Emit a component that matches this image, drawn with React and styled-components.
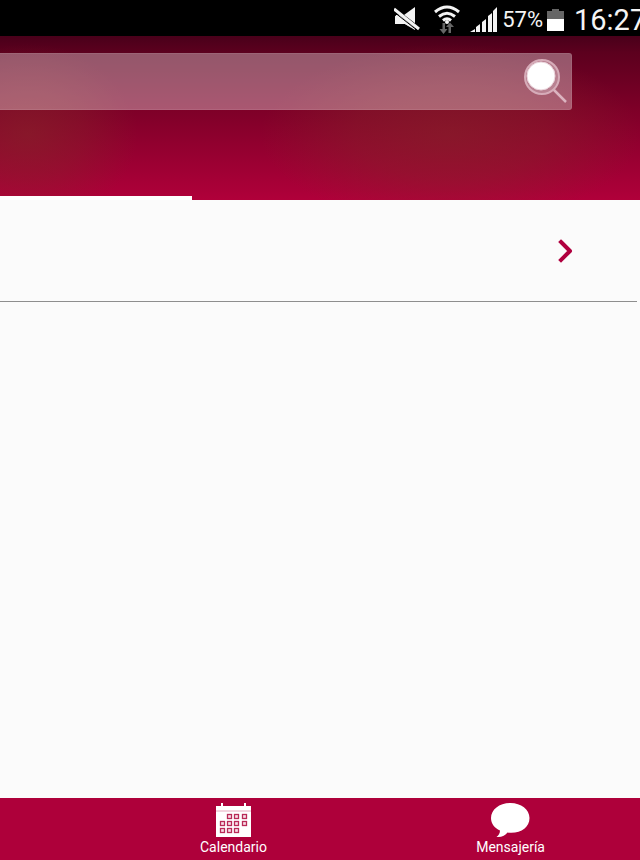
import styled, { createGlobalStyle } from "styled-components";

const GlobalStyle = createGlobalStyle`
    * {
        box-sizing: border-box;
    }

    body {
        margin: 0;
        font-family: Roboto, 'Noto Sans', sans-serif;
        background: #fbfbfb;
    }
`;

const Screen = styled.div`
    display: flex;
    flex-direction: column;
    min-height: 100vh;
    overflow: hidden;
`;

const StatusBar = styled.div`
    display: flex;
    align-items: center;
    justify-content: flex-end;
    height: 36px;
    padding-top: 3px;
    background: #000;
    color: #f4f4f4;

    & svg {
        flex: none;
    }
`;

const StatusIcons = styled.div`
    display: flex;
    align-items: center;
    gap: 10px;
    margin-right: 4px;

    & svg:first-child {
        margin-right: 4px;
    }
`;

const Battery = styled.span`
    font-size: 22px;
    line-height: 32px;
    margin-right: 4px;
`;

const Clock = styled.time`
    width: 66px;
    margin-left: 10px;
    font-size: 29px;
    line-height: 32px;
    white-space: nowrap;
`;

const Header = styled.header`
    display: flex;
    flex-direction: column;
    justify-content: space-between;
    height: 164px;
    padding-top: 17px;
    background:
        radial-gradient(ellipse 190px 90px at 450px 98px, rgba(134, 38, 40, .6), rgba(134, 38, 40, .4) 50%, transparent),
        radial-gradient(ellipse 110px 90px at 28px 98px, rgba(134, 38, 40, .6), rgba(134, 38, 40, .35) 50%, transparent),
        linear-gradient(#49001a, #5c001e 10%, #7e0028 45%, #b0003a);
`;

const SearchForm = styled.form`
    display: flex;
    align-items: center;
    height: 57px;
    margin-right: 68px;
    padding-right: 3px;
    border: solid 1px rgba(255, 255, 255, .08);
    border-left: none;
    border-radius: 0 3px 3px 0;
    background: rgba(255, 255, 255, .34);
`;

const SearchInput = styled.input`
    flex: 1;
    min-width: 0;
    height: 100%;
    padding: 0 16px;
    border: none;
    outline: none;
    background: transparent;
    color: #fff;
    font: inherit;
    font-size: 22px;
`;

const SearchButton = styled.button`
    display: flex;
    padding: 0;
    border: none;
    background: transparent;
    cursor: pointer;
`;

const ActiveTab = styled.div`
    width: 30%;
    height: 4px;
    background: #fff;
`;

const Content = styled.main`
    flex: 1;
    background: #fbfbfb;
`;

const Row = styled.button`
    display: flex;
    align-items: center;
    justify-content: flex-end;
    width: calc(100% - 3px);
    height: 102px;
    padding: 0 63px 0 0;
    border: none;
    border-bottom: solid 1px #8e8e8e;
    background: transparent;
    cursor: pointer;
`;

const BottomNav = styled.nav`
    display: flex;
    justify-content: space-between;
    height: 62px;
    padding: 5px 95px 0 200px;
    background: #ae003a;
`;

const NavItem = styled.a`
    display: flex;
    flex-direction: column;
    align-items: center;
    gap: 1px;
    color: #fff;
    font-size: 14px;
    line-height: 16px;
    text-decoration: none;
`;

const MuteIcon = () => (
    <svg width="26" height="26" viewBox="0 0 26 26" aria-hidden="true">
        <path d="M1 8h9L21 0v23L11 17H1z" fill="#f4f4f4" />
        <path d="M0 4l25 19" stroke="#000" strokeWidth="6" />
        <path d="M0 2l25 20" stroke="#f4f4f4" strokeWidth="3" />
        <path d="M2 8v9h9l10 6v-2L5 8z" fill="#f4f4f4" />
        <path d="M0 5l24 19" stroke="#000" strokeWidth="1" />
    </svg>
);

const WifiIcon = () => (
    <svg width="26" height="30" viewBox="0 0 26 30" aria-hidden="true">
        <g fill="none" stroke="#f4f4f4" strokeWidth="3">
            <path d="M1 7Q13-3 25 7" />
            <path d="M5 11.500Q13 5 21 11.500" />
            <path d="M9 15.500Q13 12 17 15.500" />
        </g>
        <circle cx="13" cy="17" r="2" fill="#f4f4f4" />
        <path d="M8.500 18h2.500v6h2.500l-4 5-4-5h3zM14.500 28H17v-6h3l-4-4.500-4 4.500h2.500z" fill="#666" />
    </svg>
);

const SignalIcon = () => (
    <svg width="28" height="26" viewBox="0 0 28 26" aria-hidden="true">
        <path d="M0 25l5-3v3zM6 20l4-3v8H6zM12 15l4-3v13h-4zM18 9l4-3v19h-4zM23 4l4-4v25h-4z" fill="#f4f4f4" />
    </svg>
);

const BatteryIcon = () => (
    <svg width="17" height="24" viewBox="0 0 17 24" aria-hidden="true">
        <path d="M0 3h5V1h7v2h5v9H0z" fill="#666" />
        <path d="M0 11h17v12H0z" fill="#fff" />
    </svg>
);

const SearchIcon = () => (
    <svg width="45" height="46" viewBox="0 0 45 46" aria-hidden="true">
        <path d="M30 30l13 13" stroke="#dbb4c0" strokeWidth="2.500" />
        <circle cx="19" cy="18" r="17" fill="#b98191" stroke="#d6acb9" strokeWidth="2" />
        <circle cx="18" cy="17" r="14" fill="#fff" stroke="#ead5dc" strokeWidth="1" />
    </svg>
);

const ChevronIcon = () => (
    <svg width="16" height="24" viewBox="0 0 16 24" aria-hidden="true">
        <path d="M3 3l9 9-9 9" fill="none" stroke="#b0003f" strokeWidth="4" strokeLinecap="square" strokeLinejoin="round" />
    </svg>
);

const calendarRows = [
    { y: 12, days: [12, 19, 27] },
    { y: 19, days: [5, 12, 19, 27] },
    { y: 26, days: [5, 12, 19] },
];

const CalendarIcon = () => (
    <svg width="35" height="35" viewBox="0 0 35 35" aria-hidden="true">
        <path d="M5 0h2v4H5zM28 0h2v4h-2zM0 3h35v31H0z" fill="#fff" />
        <path d="M0 8h35" stroke="#e6a9bd" strokeWidth="1" />
        <g fill="#f7dfe7" stroke="#b92a58" strokeWidth="1.300">
            {calendarRows.map(({ y, days }) => days.map((x) => (
                <rect key={`${x}-${y}`} x={x - 0.5} y={y - 0.5} width="4" height="4" />
            )))}
        </g>
    </svg>
);

const MessageIcon = () => (
    <svg width="39" height="35" viewBox="0 0 39 35" aria-hidden="true">
        <path d="M19.500 0C8.500 0 0 6.500 0 15c0 5.500 3.500 10 9 12.500 0 3-1.500 5-3.500 6.500 5 .5 9-1.500 11-4.500C29 31 38.500 25 38.500 15 38.500 6.500 30 0 19.500 0z" fill="#fff" />
    </svg>
);

const App = () => (
    <>
        <GlobalStyle />
        <Screen>
            <StatusBar>
                <StatusIcons>
                    <MuteIcon />
                    <WifiIcon />
                    <SignalIcon />
                </StatusIcons>
                <Battery>57%</Battery>
                <BatteryIcon />
                <Clock>16:27</Clock>
            </StatusBar>
            <Header>
                <SearchForm role="search" onSubmit={(e) => e.preventDefault()}>
                    <SearchInput type="text" aria-label="Buscar" />
                    <SearchButton type="submit" aria-label="Buscar">
                        <SearchIcon />
                    </SearchButton>
                </SearchForm>
                <ActiveTab />
            </Header>
            <Content>
                <Row type="button" aria-label="Abrir">
                    <ChevronIcon />
                </Row>
            </Content>
            <BottomNav>
                <NavItem href="#calendario">
                    <CalendarIcon />
                    Calendario
                </NavItem>
                <NavItem href="#mensajeria">
                    <MessageIcon />
                    Mensajería
                </NavItem>
            </BottomNav>
        </Screen>
    </>
);

export default App;
